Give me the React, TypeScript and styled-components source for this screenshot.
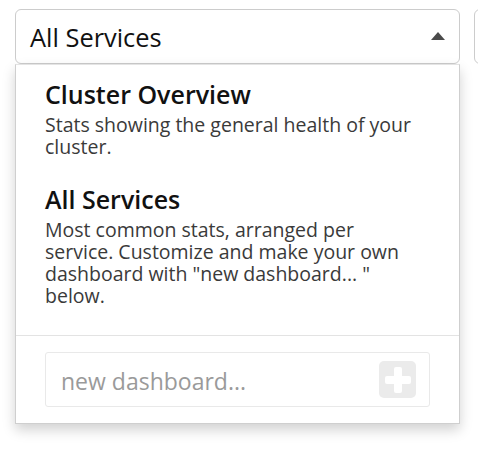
import React from "react";
import styled, { createGlobalStyle } from "styled-components";

const GlobalStyle = createGlobalStyle`
  html, body {
    margin: 0;
    padding: 0;
    background: #ffffff;
    overflow: hidden;
  }
  body {
    font-family: "Open Sans", "Liberation Sans", sans-serif;
    color: #111;
  }
  * { box-sizing: border-box; }
`;

const Page = styled.div`
  display: flex;
  align-items: flex-start;
  gap: 14px;
  padding: 9px 0 0 15px;
  width: 478px;
  height: 464px;
`;

const SelectWrap = styled.div`
  position: relative;
  flex: 0 0 445px;
`;

const SelectButton = styled.div`
  height: 55px;
  border: 1px solid #cccccc;
  border-radius: 6px;
  padding: 0 14px 0 14px;
  display: flex;
  align-items: center;
  justify-content: space-between;
  font-size: 25.4px;
  color: #111;
  background: #fff;
`;

const Caret = styled.span`
  width: 0;
  height: 0;
  border-left: 7px solid transparent;
  border-right: 7px solid transparent;
  border-bottom: 8px solid #4a4a4a;
  margin-top: -2px;
`;

const OtherSelect = styled.div`
  flex: 0 0 200px;
  height: 55px;
  border: 1px solid #cccccc;
  border-radius: 6px;
  background: #fff;
`;

const Menu = styled.div`
  position: absolute;
  top: 100%;
  left: 0;
  width: 445px;
  background: #fff;
  border: 1px solid #cfcfcf;
  border-top-color: #e4e4e4;
  box-shadow: 0 6px 12px rgba(0, 0, 0, 0.18);
`;

const List = styled.div`
  display: flex;
  flex-direction: column;
  padding: 2px 0 14px;
`;

const Item = styled.div`
  padding: 13px 40px 14px 29px;
  display: flex;
  flex-direction: column;
  gap: 5px;
`;

const ItemTitle = styled.div`
  font-size: 25px;
  line-height: 29px;
  font-weight: 600;
  color: #111;
`;

const ItemDesc = styled.div`
  font-size: 19.5px;
  line-height: 22px;
  color: #3a3a3a;
`;

const Footer = styled.div`
  border-top: 1px solid #e3e3e3;
  padding: 16px 29px 16px;
`;

const InputBox = styled.div`
  height: 55px;
  border: 1px solid #e9e9e9;
  border-radius: 3px;
  display: flex;
  align-items: center;
  justify-content: space-between;
  padding: 0 13px 0 15px;
`;

const Placeholder = styled.span`
  font-size: 23px;
  color: #9a9a9a;
  padding-top: 2px;
`;

const AddButton = styled.div`
  width: 37px;
  height: 37px;
  border-radius: 5px;
  background: #ebebeb;
  display: flex;
  align-items: center;
  justify-content: center;
`;

const PlusIcon = () => (
  <svg width="26" height="26" viewBox="0 0 26 26">
    <rect x="9" y="0" width="8" height="26" rx="2" fill="#fff" />
    <rect x="0" y="9" width="26" height="8" rx="2" fill="#fff" />
  </svg>
);

const items = [
  {
    title: "Cluster Overview",
    desc: "Stats showing the general health of your cluster.",
  },
  {
    title: "All Services",
    desc: 'Most common stats, arranged per service. Customize and make your own dashboard with "new dashboard... " below.',
  },
];

export default function App() {
  return (
    <>
      <GlobalStyle />
      <Page>
        <SelectWrap>
          <SelectButton>
            <span>All Services</span>
            <Caret />
          </SelectButton>
          <Menu>
            <List>
              {items.map((it) => (
                <Item key={it.title}>
                  <ItemTitle>{it.title}</ItemTitle>
                  <ItemDesc>{it.desc}</ItemDesc>
                </Item>
              ))}
            </List>
            <Footer>
              <InputBox>
                <Placeholder>new dashboard...</Placeholder>
                <AddButton>
                  <PlusIcon />
                </AddButton>
              </InputBox>
            </Footer>
          </Menu>
        </SelectWrap>
        <OtherSelect />
      </Page>
    </>
  );
}
